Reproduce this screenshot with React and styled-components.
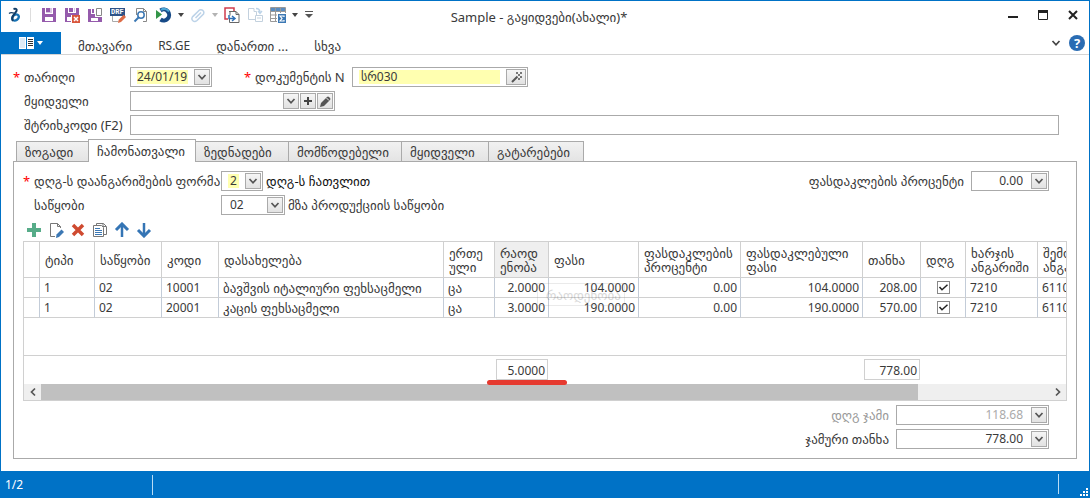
import React from 'react';
import styled, { createGlobalStyle, css } from 'styled-components';

const GlobalStyle = createGlobalStyle`
  * { box-sizing: border-box; }
  body {
    margin: 0;
    background: #fff;
    color: #3a3a3a;
    font: 13px/16px "Noto Sans", "DejaVu Sans", sans-serif;
  }
  button, input, select { font: inherit; color: inherit; margin: 0; }
  button { padding: 0; }
  svg { display: block; flex: none; }
`;

const Window = styled.div`
  min-height: 100vh;
  display: flex;
  flex-direction: column;
  border: 1px solid #0072c6;
  border-bottom: 0;
`;

const TitleBar = styled.header`
  display: grid;
  grid-template-columns: 1fr auto 1fr;
  align-items: center;
  height: 31px;
  padding: 0 11px 4px 7px;
`;

const QuickAccess = styled.div`
  display: flex;
  align-items: center;
`;

const Title = styled.h1`
  margin: 0;
  padding: 4px 8px 0 0;
  font-size: 13px;
  font-weight: normal;
`;

const WindowControls = styled.div`
  display: flex;
  justify-content: flex-end;
  gap: 19px;
`;

const IconButton = styled.button`
  display: flex;
  align-items: center;
  justify-content: center;
  width: ${p => p.$w || 16}px;
  height: ${p => p.$h || 16}px;
  margin-left: ${p => p.$gap || 0}px;
  border: 0;
  background: transparent;
  opacity: ${p => (p.$dim ? 0.4 : 1)};
`;

const Separator = styled.span`
  width: 1px;
  height: 14px;
  margin-left: 6px;
  margin-right: 3px;
  background: #ddd;
`;

const Ribbon = styled.nav`
  display: flex;
  align-items: stretch;
  height: 23px;
  border-bottom: 1px solid #d4d4d4;
`;

const FileButton = styled.button`
  display: flex;
  align-items: center;
  justify-content: center;
  gap: 3px;
  width: 60px;
  margin-right: 1px;
  border: 0;
  background: #0072c6;
`;

const RibbonTab = styled.button`
  padding: 6px 0 0;
  margin-left: ${p => p.$gap}px;
  border: 0;
  background: transparent;
  font-size: ${p => (p.$latin ? 12 : 13)}px;
  line-height: 16px;
`;

const RibbonEnd = styled.div`
  display: flex;
  align-items: center;
  margin-left: auto;
  padding-right: 4px;
`;

const Main = styled.main`
  flex: 1;
  padding: 12px 12px;
`;

const Form = styled.form`
  display: grid;
  gap: 4px;
  padding-right: 18px;
`;

const Row = styled.div`
  display: flex;
  align-items: center;
  height: 20px;
`;

const Label = styled.label`
  display: flex;
  flex: none;
  width: ${p => (p.$w ? p.$w + 'px' : 'auto')};
  margin-left: ${p => p.$gap || 0}px;
  padding-right: ${p => p.$pad || 0}px;
  white-space: nowrap;
  color: ${p => (p.$muted ? '#999' : 'inherit')};
  &::before {
    content: "${p => (p.$required ? '*' : '')}";
    flex: none;
    width: ${p => (p.$plain ? 0 : 11)}px;
    color: #f00;
  }
`;

const Field = styled.div`
  display: flex;
  align-items: center;
  gap: 1px;
  height: 20px;
  min-width: 0;
  padding: 0 1px;
  border: 1px solid #aaa;
  background: #fff;
  ${p => (p.$w ? css`width: ${p.$w}px; flex: none;` : css`flex: 1;`)}
`;

const editor = css`
  flex: 1;
  width: 0;
  min-width: 0;
  height: 14px;
  border: 0;
  outline: 0;
  padding: 0 ${p => (p.$tight ? 0 : 2)}px;
  margin-left: 5px;
  margin-right: 5px;
  font-size: 12px;
  line-height: 14px;
  text-align: ${p => (p.$right ? 'right' : 'left')};
  color: ${p => (p.$muted ? '#aaa' : 'inherit')};
  background: ${p => (p.$required ? '#ffffb0' : 'transparent')};
`;

const TextInput = styled.input`${editor}`;

const SelectInput = styled.select`
  ${editor}
  appearance: none;
`;

const FieldButton = styled.button`
  display: flex;
  align-items: center;
  justify-content: center;
  flex: none;
  width: ${p => p.$w || 16}px;
  height: 16px;
  border: 1px solid #aaa;
  background: linear-gradient(#f5f5f5, #e2e2e2);
`;

const FieldNote = styled.span`
  margin-left: 3px;
  color: ${p => (p.$strong ? '#111' : 'inherit')};
`;

const Tabs = styled.div`
  display: flex;
  align-items: flex-end;
  height: 22px;
  margin-top: 5px;
  padding-left: 3px;
`;

const Tab = styled.button`
  width: ${p => p.$w}px;
  height: 21px;
  border: 1px solid #aaa;
  border-left-width: ${p => (p.$first || p.$active ? 1 : 0)}px;
  background: linear-gradient(#f1f1f1, #e4e4e4);
  text-align: left;
  padding-left: 8px;
  ${p => p.$active && css`
    height: 23px;
    margin-left: -1px;
    border-bottom: 0;
    background: #fff;
    position: relative;
    z-index: 1;
  `}
`;

const Panel = styled.section`
  margin-top: -1px;
  padding: 9px 9px 9px;
  border: 1px solid #aaa;
`;

const PanelForm = styled.div`
  display: grid;
  gap: 4px;
  padding-right: 18px;
`;

const Push = styled.div`
  display: flex;
  align-items: center;
  margin-left: auto;
`;

const Toolbar = styled.div`
  display: flex;
  align-items: center;
  gap: 6px;
  height: 26px;
  padding: 4px 3px 0;
`;

const Grid = styled.div`
  position: relative;
  overflow: hidden;
  border: 1px solid #d0d0d0;
`;

const Table = styled.table`
  width: 1116px;
  table-layout: fixed;
  border-collapse: separate;
  border-spacing: 0;
`;

const HeadCell = styled.th`
  position: relative;
  height: 36px;
  padding: 0 0 0 5px;
  border-right: 1px solid #d0d0d0;
  border-bottom: 1px solid #d0d0d0;
  background: ${p => (p.$active ? '#efefef' : '#fff')};
  font-size: 13px;
  font-weight: normal;
  line-height: 14px;
  text-align: left;
  white-space: nowrap;
`;

const Cell = styled.td`
  height: 20px;
  padding: 0 ${p => (p.$align === 'right' ? 3 : 4)}px;
  border-right: 1px solid #c3ccd8;
  border-bottom: 1px solid #d0d0d0;
  font-size: ${p => (p.$text ? 13 : 12)}px;
  line-height: 16px;
  text-align: ${p => p.$align || 'left'};
  white-space: nowrap;
`;

const SpacerCell = styled.td`
  height: 38px;
  padding: 0;
  border-bottom: 1px solid #d0d0d0;
`;

const TotalCell = styled.td`
  position: relative;
  height: 28px;
  padding: 3px 1px 4px;
  font-size: 12px;
`;

const TotalBox = styled.div`
  height: 21px;
  padding: 3px 2px 0;
  border: 1px solid #d0d0d0;
  line-height: 16px;
  text-align: right;
`;

const Marker = styled.span`
  position: absolute;
  z-index: 2;
  left: -8px;
  bottom: -1px;
  width: 80px;
  height: 5px;
  border-radius: 3px;
  background: #e63a30;
`;

const DragGhost = styled.span`
  position: absolute;
  z-index: 2;
  left: 42px;
  top: 41px;
  width: 88px;
  padding: 4px 8px;
  height: 23px;
  border: 1px solid #999;
  color: #444;
  opacity: 0.2;
`;

const Check = styled.input`
  appearance: none;
  display: block;
  width: 13px;
  height: 13px;
  margin: 0 auto;
  border: 1px solid #888;
  background: #fff;
  &:checked {
    background: url("data:image/svg+xml,%3Csvg xmlns='http://www.w3.org/2000/svg' viewBox='0 0 11 11'%3E%3Cpath d='M1.5 5 4 7.8 9.5 2.8' fill='none' stroke='%23222' stroke-width='1.5'/%3E%3C/svg%3E");
  }
`;

const ScrollBar = styled.div`
  display: flex;
  height: 16px;
  background: #efefef;
`;

const ScrollButton = styled.button`
  display: flex;
  align-items: center;
  justify-content: center;
  width: 17px;
  border: 0;
  background: transparent;
`;

const ScrollTrack = styled.div`
  flex: 1;
`;

const ScrollThumb = styled.div`
  width: 87%;
  height: 100%;
  background: #c0c0c0;
`;

const Totals = styled.div`
  display: grid;
  justify-content: end;
  gap: 4px;
  padding: 4px 18px 0 0;
`;

const TotalRow = styled(Row)`
  justify-content: flex-end;
`;

const StatusBar = styled.footer`
  display: flex;
  align-items: center;
  height: 27px;
  padding: 0 0 0 4px;
  background: #0072c6;
  color: #fff;
  font-size: 12px;
`;

const Position = styled.span`
  width: 148px;
  border-right: 1px solid #b9dcf5;
  line-height: 20px;
`;

const StatusEnd = styled.div`
  display: flex;
  justify-content: flex-end;
  align-items: flex-end;
  align-self: stretch;
  width: 31px;
  margin: 3px 0 0 auto;
  padding: 0 1px 2px 0;
  background: linear-gradient(#b9dcf5, #b9dcf5) left top / 1px 20px no-repeat;
`;

const Chevron = ({ d = 'M1.5 2 5 5.8 8.5 2', w = 10, h = 8, color = '#555' }) => (
  <svg width={w} height={h} viewBox={`0 0 ${w} ${h}`}><path d={d} fill="none" stroke={color} strokeWidth="1.7" /></svg>
);
const Caret = ({ color = '#444' }) => (
  <svg width="6" height="4" viewBox="0 0 6 4"><path d="M0 0h6L3 4z" fill={color} /></svg>
);

const Svg = ({ children, size = 16 }) => (
  <svg width={size} height={size} viewBox="0 0 16 16" fill="none">{children}</svg>
);

const LogoIcon = () => (
  <Svg>
    <ellipse cx="7.5" cy="10.500" rx="3.600" ry="2.700" transform="rotate(-35 7.500 10.500)" stroke="#1773b5" strokeWidth="2.400" />
    <path d="M5.500 2Q9.500 1 8.500 4L5 9Q3.500 12 5 14" stroke="#123d66" strokeWidth="2" />
    <path d="M1 6.500Q3 5 6 6.200" stroke="#123d66" strokeWidth="1.400" />
  </Svg>
);
const SaveIcon = () => (
  <Svg>
    <path d="M1 1h3v6h8V1h3v14H1z" fill="#955bac" />
    <path d="M5 1h6v5H5z" fill="#d9c5e3" /><path d="M5 1h4v4H5z" fill="#955bac" />
    <path d="M4 10h8v4H4z" fill="#fff" />
  </Svg>
);
const SaveCloseIcon = () => (
  <Svg>
    <path d="M1 1h3v5h8V1h3v7H7v7H1z" fill="#955bac" />
    <path d="M5 1h4v4H5z" fill="#955bac" /><path d="M10 1h1v4h-1z" fill="#d9c5e3" />
    <path d="M3 10h4v4H3z" fill="#fff" />
    <path d="M8 8h8v8H8z" fill="#d9573d" />
    <path d="m10 10 4 4m0-4-4 4" stroke="#fff" strokeWidth="1.500" />
  </Svg>
);
const SaveNewIcon = () => (
  <Svg>
    <path d="M1 2h3v5h4v3h7v5H1zM5 2h2v4H5z" fill="#955bac" />
    <path d="M4 11h7v3H4z" fill="#fff" />
    <path d="M9.500 1.500h5v7h-5z" fill="#fff" stroke="#888" />
  </Svg>
);
const DrfText = styled.text`
  font: bold 7px "Liberation Mono", monospace;
`;
const DraftIcon = () => (
  <Svg>
    <path d="M0 1h15v8H0z" fill="#2e5388" />
    <DrfText x="1" y="7" fill="#fff">DRF</DrfText>
    <path d="M2.500 9v5.500h6" stroke="#aaa" />
    <path d="m8 16 .7-3.200 5-5L16 10l-5 5z" fill="#dd6c46" />
  </Svg>
);
const PreviewIcon = () => (
  <Svg>
    <path d="M3.500 8V1.500h7l3 3v10H10" stroke="#888" />
    <path d="M10.500 1.500v3h3" stroke="#888" />
    <circle cx="8" cy="8" r="3.200" fill="#fff" stroke="#3c78b4" strokeWidth="1.500" />
    <path d="m5.500 10.500-4 4" stroke="#3c78b4" strokeWidth="2" />
  </Svg>
);
const RefreshIcon = () => (
  <Svg>
    <path d="M4.500 3.500a5.500 5.500 0 1 1 0 9" stroke="#174a87" strokeWidth="4" />
    <path d="M5 3a5.500 5.500 0 0 1 8 1.500" stroke="#4aa5d4" strokeWidth="2" />
    <path d="M0 3 6 7.500 0 12z" fill="#339548" />
  </Svg>
);
const ClipIcon = () => (
  <Svg>
    <path d="M3 9.500 9.500 3a3 3 0 0 1 4 4L7 13.500c-3 2.500-6.500-.5-4.500-3.700L9 3.500M5.500 11 11 5.500" stroke="#5a93c8" strokeWidth="1.500" />
  </Svg>
);
const CopyDocIcon = () => (
  <Svg>
    <path d="M4 12H1V1h9v3" stroke="#d03c4c" strokeWidth="1.500" />
    <path d="M6 4.500h6l3 3v8H5.500V12" stroke="#666" />
    <path d="M5 4.500h1v4M12 4.500v3h3" stroke="#666" />
    <path d="M5 8v3.500h5M8 9l3 2.500L8 14" stroke="#2f70b7" strokeWidth="1.500" />
  </Svg>
);
const TransferIcon = () => (
  <Svg>
    <path d="M8 12.500H1.500v-11H7v3h2.500V8M8.500 8.500h7v6h-7zM10 11h4" stroke="#6a8eae" />
    <path d="M9 1.500q4 0 4 4M11 4l2 2.500L15 4" stroke="#5a93c8" strokeWidth="1.300" />
  </Svg>
);
const PivotIcon = () => (
  <Svg>
    <path d="M.5.500h15v14H.500zM0 4.500h16M0 8h8M0 11.500h8M5.500 1v14M10.500 1v6" stroke="#999" />
    <path d="M1 1h4v3H1zM6 1h4v3H6zM11 1h4v3h-4z" fill="#5a8dc0" />
    <path d="M7 6h9v10H7z" fill="#fff" />
    <path d="M8 7h8v9H8z" fill="#3c78b4" />
    <path d="M14 10V9h-4l2 2.500-2 2.500h4v-1" stroke="#fff" strokeWidth="1.200" />
  </Svg>
);
const OverflowIcon = () => (
  <svg width="8" height="7" viewBox="0 0 8 7"><path d="M0 0h8v1H0zM0 3h8L4 7z" fill="#555" /></svg>
);
const BookIcon = () => (
  <svg width="15" height="12" viewBox="0 0 15 12">
    <path d="M0 0h7v12H0zM8 0h7v12H8z" fill="#fff" />
    <path d="M1 1h5v10H1z" fill="#dceaf6" /><path d="M9 2.500h5M9 4.500h5M9 6.500h5M9 8.500h5" stroke="#333" />
  </svg>
);
const HelpText = styled.text`
  font: bold 13px "Noto Sans", sans-serif;
`;
const HelpIcon = () => (
  <Svg>
    <circle cx="8" cy="8" r="8" fill="#2a6cb3" />
    <HelpText x="8" y="13" textAnchor="middle" fill="#fff">?</HelpText>
  </Svg>
);
const WandIcon = () => (
  <svg width="11" height="11" viewBox="0 0 11 11">
    <path d="M1 10 6.500 4.500" stroke="#555" strokeWidth="2" />
    <path d="M5 0h2v2H5zM9 0h2v2H9zM7 2h2v2H7zM9 4h2v2H9zM7 6h2v2H7z" fill="#777" />
  </svg>
);
const PencilIcon = () => (
  <svg width="11" height="11" viewBox="0 0 11 11"><path d="m0 11 1-4 6-6q1-1 2 0l1 1q1 1 0 2l-6 6z" fill="#555" /><path d="m6.500 2 2.500 2.500" stroke="#eee" /></svg>
);
const PlusSmall = () => (
  <svg width="8" height="8" viewBox="0 0 8 8"><path d="M4 0v8M0 4h8" stroke="#444" strokeWidth="2" /></svg>
);
const AddIcon = () => <Svg><path d="M8 1v14M1 8h14" stroke="#57ac89" strokeWidth="4" /></Svg>;
const EditIcon = () => (
  <Svg>
    <path d="M7 14.500H2.500v-13h7l3 3V6M9.500 1.500v3h3" stroke="#777" />
    <path d="m8 16 .5-3.500 5-5L16 10l-5 5z" fill="#3c78b4" />
  </Svg>
);
const DeleteIcon = () => <Svg><path d="m3 3 10 10M13 3 3 13" stroke="#cf4a30" strokeWidth="3.500" /></Svg>;
const CopyIcon = () => (
  <Svg>
    <path d="M4.500 3V1.500h7l3 3v8H12" stroke="#777" /><path d="M1.500 3.500h8l2 2v9h-10zM11 1.500v3h3" stroke="#777" />
    <path d="M3 6.500h5M3 8.500h7M3 10.500h7M3 12.500h7" stroke="#3c78b4" />
  </Svg>
);
const ArrowIcon = ({ down }) => (
  <svg width="16" height="16" viewBox="0 0 16 16" fill="none" stroke="#3575b5">
    <path d={down ? 'M8 1v13' : 'M8 15V2'} strokeWidth="2.500" />
    <path d={down ? 'm2 8 6 6 6-6' : 'm2 8 6-6 6 6'} strokeWidth="3" />
  </svg>
);

const widths = [16, 55, 67, 57, 225, 51, 54, 90, 102, 122, 58, 45, 72, 102];

const headers = [
  [''], ['ტიპი'], ['საწყობი'], ['კოდი'], ['დასახელება'], ['ერთე', 'ული'], ['რაოდ', 'ენობა'], ['ფასი'],
  ['ფასდაკლების', 'პროცენტი'], ['ფასდაკლებული', 'ფასი'], ['თანხა'], ['დღგ'], ['ხარჯის', 'ანგარიში'],
  ['შემოსავლის', 'ანგარიში'],
];

const rows = [
  ['1', '02', '10001', 'ბავშვის იტალიური ფეხსაცმელი', 'ცა', '2.0000', '104.0000', '0.00', '104.0000', '208.00', '7210', '6110'],
  ['1', '02', '20001', 'კაცის ფეხსაცმელი', 'ცა', '3.0000', '190.0000', '0.00', '190.0000', '570.00', '7210', '6110'],
];

const tabs = [
  ['ზოგადი', 73], ['ჩამონათვალი', 108], ['ზედნადები', 93], ['მომწოდებელი', 113], ['მყიდველი', 87], ['გატარებები', 95],
];

const DropButton = () => <FieldButton type="button" aria-label="გახსნა"><Chevron /></FieldButton>;

export default function App() {
  return (
    <>
      <GlobalStyle />
      <Window>
        <TitleBar>
          <QuickAccess>
            <LogoIcon />
            <Separator />
            <IconButton $gap={7} aria-label="შენახვა"><SaveIcon /></IconButton>
            <IconButton $gap={7} aria-label="შენახვა და დახურვა"><SaveCloseIcon /></IconButton>
            <IconButton $gap={7} aria-label="შენახვა და ახალი"><SaveNewIcon /></IconButton>
            <IconButton $gap={7} aria-label="DRF"><DraftIcon /></IconButton>
            <IconButton $gap={7} aria-label="ნახვა"><PreviewIcon /></IconButton>
            <IconButton $gap={7} aria-label="განახლება"><RefreshIcon /></IconButton>
            <IconButton $gap={6} $w={6} aria-label="მენიუ"><Caret /></IconButton>
            <IconButton $gap={6} $dim aria-label="მიმაგრება"><ClipIcon /></IconButton>
            <IconButton $gap={6} $w={6} $dim aria-label="მენიუ"><Caret /></IconButton>
            <IconButton $gap={6} aria-label="ასლი"><CopyDocIcon /></IconButton>
            <IconButton $gap={7} $dim aria-label="გადატანა"><TransferIcon /></IconButton>
            <IconButton $gap={7} aria-label="ჯამი"><PivotIcon /></IconButton>
            <IconButton $gap={6} $w={6} aria-label="მენიუ"><Caret /></IconButton>
            <IconButton $gap={7} $w={8} aria-label="სხვა"><OverflowIcon /></IconButton>
          </QuickAccess>
          <Title>Sample - გაყიდვები(ახალი)*</Title>
          <WindowControls>
            <IconButton $w={11} aria-label="Minimize"><svg width="10" height="10"><path d="M0 6h10v2H0z" fill="#222" /></svg></IconButton>
            <IconButton $w={11} aria-label="Maximize"><svg width="10" height="10"><path d="M.5.500h9v9h-9z" fill="none" stroke="#222" /><path d="M0 0h10v3H0z" fill="#222" /></svg></IconButton>
            <IconButton $w={11} aria-label="Close"><svg width="10" height="10"><path d="m1 1 8 8M9 1 1 9" stroke="#222" strokeWidth="2" /></svg></IconButton>
          </WindowControls>
        </TitleBar>

        <Ribbon>
          <FileButton aria-label="ფაილი"><BookIcon /><Caret color="#fff" /></FileButton>
          <RibbonTab $gap={16}>მთავარი</RibbonTab>
          <RibbonTab $gap={26} $latin>RS.GE</RibbonTab>
          <RibbonTab $gap={26}>დანართი ...</RibbonTab>
          <RibbonTab $gap={26}>სხვა</RibbonTab>
          <RibbonEnd>
            <IconButton $w={10} aria-label="ჩაკეცვა"><Chevron color="#444" /></IconButton>
            <IconButton $gap={8} aria-label="დახმარება"><HelpIcon /></IconButton>
          </RibbonEnd>
        </Ribbon>

        <Main>
          <Form>
            <Row>
              <Label htmlFor="date" $w={117} $required>თარიღი</Label>
              <Field $w={82}><TextInput id="date" defaultValue="24/01/19" $required $tight /><DropButton /></Field>
              <Label htmlFor="number" $required $gap={32} $w={108}>დოკუმენტის N</Label>
              <Field $w={176}>
                <TextInput id="number" defaultValue="სრ030" $required />
                <FieldButton type="button" $w={20} aria-label="ნომრის მინიჭება"><WandIcon /></FieldButton>
              </Field>
            </Row>
            <Row>
              <Label htmlFor="buyer" $w={117}>მყიდველი</Label>
              <Field $w={205}>
                <TextInput id="buyer" />
                <DropButton />
                <FieldButton type="button" aria-label="დამატება"><PlusSmall /></FieldButton>
                <FieldButton type="button" aria-label="რედაქტირება"><PencilIcon /></FieldButton>
              </Field>
            </Row>
            <Row>
              <Label htmlFor="barcode" $w={117}>შტრიხკოდი (F2)</Label>
              <Field><TextInput id="barcode" /></Field>
            </Row>
          </Form>

          <Tabs role="tablist">
            {tabs.map(([name, w], i) => (
              <Tab key={name} type="button" role="tab" aria-selected={i === 1} $w={w} $first={i === 0} $active={i === 1}>{name}</Tab>
            ))}
          </Tabs>

          <Panel>
            <PanelForm>
              <Row>
                <Label htmlFor="vat" $w={198} $required>დღგ-ს დაანგარიშების ფორმა</Label>
                <Field $w={42}><SelectInput id="vat" $required><option>2</option></SelectInput><DropButton /></Field>
                <FieldNote $strong>დღგ-ს ჩათვლით</FieldNote>
                <Push>
                  <Label htmlFor="discount" $plain $pad={7}>ფასდაკლების პროცენტი</Label>
                  <Field $w={78}><TextInput id="discount" defaultValue="0.00" $right /><DropButton /></Field>
                </Push>
              </Row>
              <Row>
                <Label htmlFor="store" $w={198}>საწყობი</Label>
                <Field $w={64}><SelectInput id="store"><option>02</option></SelectInput><DropButton /></Field>
                <FieldNote>მზა პროდუქციის საწყობი</FieldNote>
              </Row>
            </PanelForm>

            <Toolbar>
              <IconButton aria-label="დამატება"><AddIcon /></IconButton>
              <IconButton aria-label="რედაქტირება"><EditIcon /></IconButton>
              <IconButton aria-label="წაშლა"><DeleteIcon /></IconButton>
              <IconButton aria-label="ასლი"><CopyIcon /></IconButton>
              <IconButton aria-label="ზემოთ"><ArrowIcon /></IconButton>
              <IconButton aria-label="ქვემოთ"><ArrowIcon down /></IconButton>
            </Toolbar>

            <Grid>
              <Table>
                <colgroup>{widths.map((w, i) => <col key={i} width={w} />)}</colgroup>
                <thead>
                  <tr>
                    {headers.map((lines, i) => (
                      <HeadCell key={i} $active={i === 6}>
                        {lines[0]}{lines[1] && <><br />{lines[1]}</>}
                        {i === 6 && <DragGhost>რაოდენობა</DragGhost>}
                      </HeadCell>
                    ))}
                  </tr>
                </thead>
                <tbody>
                  {rows.map(r => (
                    <tr key={r[2]}>
                      <Cell />
                      {r.slice(0, 3).map((v, i) => <Cell key={i}>{v}</Cell>)}
                      <Cell $text>{r[3]}</Cell>
                      <Cell $text>{r[4]}</Cell>
                      {r.slice(5, 10).map((v, i) => <Cell key={i} $align="right">{v}</Cell>)}
                      <Cell $align="center"><Check type="checkbox" defaultChecked aria-label="დღგ" /></Cell>
                      {r.slice(10).map((v, i) => <Cell key={i}>{v}</Cell>)}
                    </tr>
                  ))}
                  <tr><SpacerCell colSpan={14} /></tr>
                </tbody>
                <tfoot>
                  <tr>
                    <TotalCell colSpan={6} />
                    <TotalCell><TotalBox>5.0000</TotalBox><Marker /></TotalCell>
                    <TotalCell colSpan={3} />
                    <TotalCell><TotalBox>778.00</TotalBox></TotalCell>
                    <TotalCell colSpan={3} />
                  </tr>
                </tfoot>
              </Table>
              <ScrollBar>
                <ScrollButton type="button" aria-label="მარცხნივ"><Chevron w={8} h={10} d="M6 1.500 2.500 5 6 8.500" /></ScrollButton>
                <ScrollTrack><ScrollThumb /></ScrollTrack>
                <ScrollButton type="button" aria-label="მარჯვნივ"><Chevron w={8} h={10} d="M2 1.500 5.500 5 2 8.500" /></ScrollButton>
              </ScrollBar>
            </Grid>

            <Totals>
              <TotalRow>
                <Label htmlFor="vatTotal" $plain $muted $pad={7}>დღგ ჯამი</Label>
                <Field $w={153}><TextInput id="vatTotal" defaultValue="118.68" $right $muted readOnly /><DropButton /></Field>
              </TotalRow>
              <TotalRow>
                <Label htmlFor="total" $plain $pad={7}>ჯამური თანხა</Label>
                <Field $w={153}><TextInput id="total" defaultValue="778.00" $right /><DropButton /></Field>
              </TotalRow>
            </Totals>
          </Panel>
        </Main>

        <StatusBar>
          <Position>1/2</Position>
          <StatusEnd>
            <svg width="8" height="8"><path d="M6 0h2v2H6zM3 3h2v2H3zM6 3h2v2H6zM0 6h2v2H0zM3 6h2v2H3zM6 6h2v2H6z" fill="#fff" /></svg>
          </StatusEnd>
        </StatusBar>
      </Window>
    </>
  );
}
